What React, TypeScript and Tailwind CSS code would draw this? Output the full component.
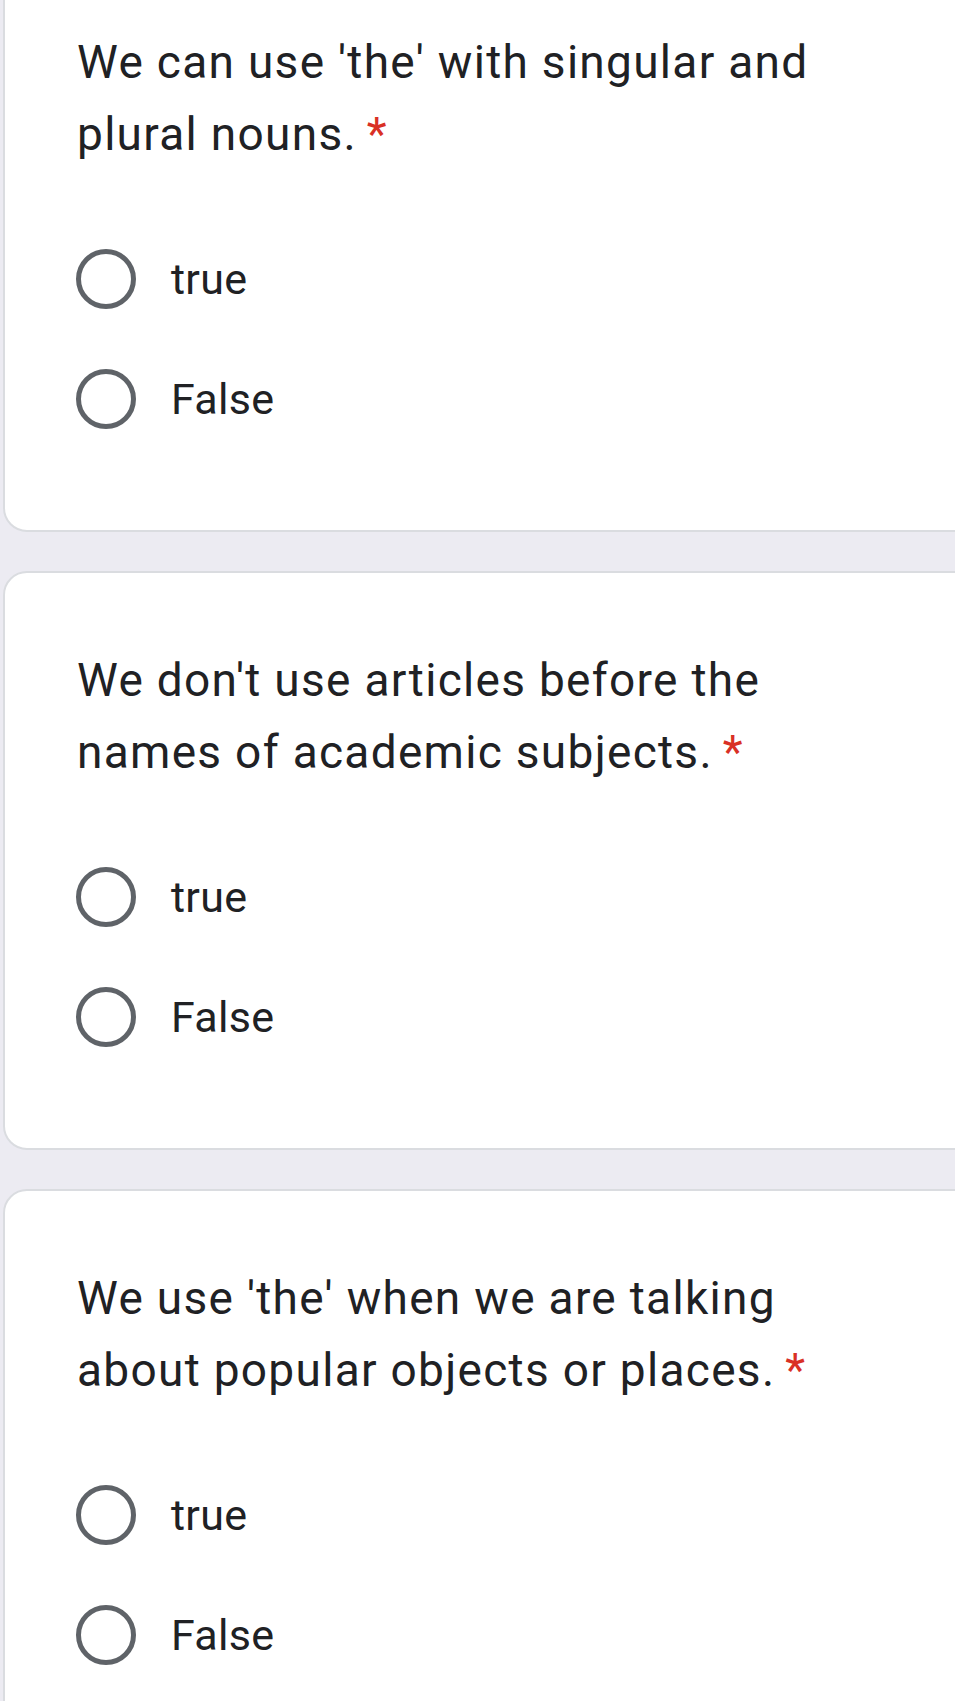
import React from "react";

const questions = [
  "We can use 'the' with singular and plural nouns.",
  "We don't use articles before the names of academic subjects.",
  "We use 'the' when we are talking about popular objects or places.",
];

function Radio({ label }: { label: string }) {
  return (
    <div className="flex h-[120px] items-center gap-[35px]">
      <div className="h-[60px] w-[60px] shrink-0 rounded-full border-[5px] border-[#5f6368] -ml-px" />
      <span
        className="text-[43px] tracking-[0.3px] text-[#202124]"
        style={{ fontFamily: "Roboto, 'Liberation Sans', sans-serif" }}
      >
        {label}
      </span>
    </div>
  );
}

function Card({ text }: { text: string }) {
  return (
    <div className="h-[579px] w-[1000px] shrink-0 rounded-[24px] border-2 border-[#dadce0] bg-white pl-[72px] pr-[180px] pt-[71px]">
      <div
        className="w-[790px] text-[46px] leading-[72px] tracking-[1.3px] text-[#202124]"
        style={{ fontFamily: "Roboto, 'Open Sans', sans-serif" }}
      >
        {text}
        <span className="pl-[10px] text-[#d93025]">*</span>
      </div>
      <div className="mt-[49px] flex flex-col">
        <Radio label="true" />
        <Radio label="False" />
      </div>
    </div>
  );
}

export default function App() {
  return (
    <div className="h-[1701px] w-[955px] overflow-hidden bg-[#ecebf2]">
      <div className="-mt-[47px] flex flex-col gap-[39px] pl-[3px]">
        {questions.map((q) => (
          <Card key={q} text={q} />
        ))}
      </div>
    </div>
  );
}
